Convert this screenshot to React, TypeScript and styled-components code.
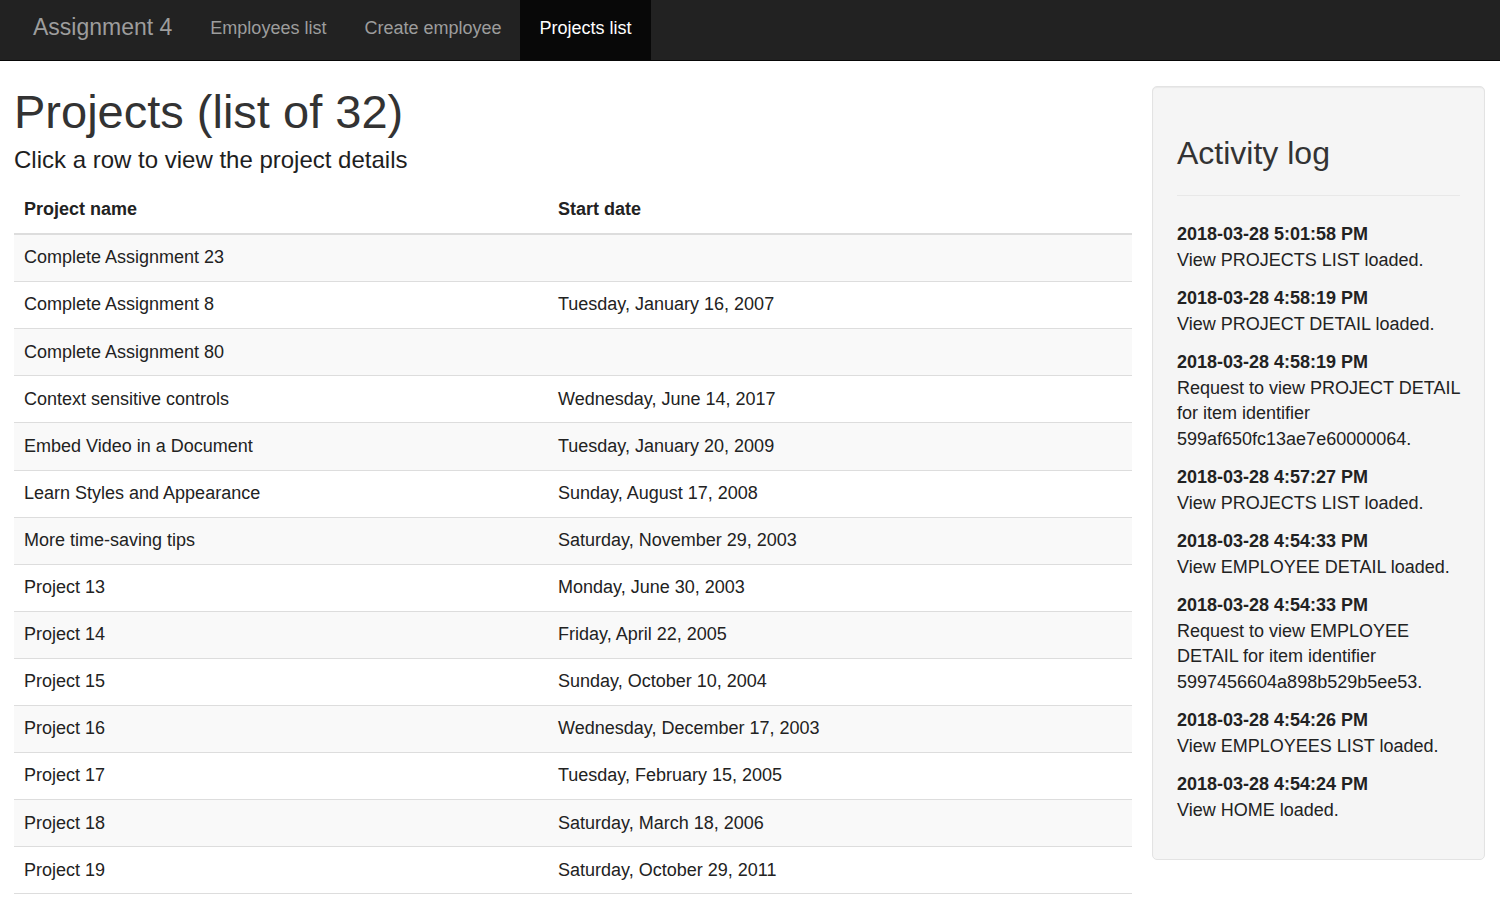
import styled, { createGlobalStyle } from 'styled-components';

const projects = [
  { name: 'Complete Assignment 23', start: '' },
  { name: 'Complete Assignment 8', start: 'Tuesday, January 16, 2007' },
  { name: 'Complete Assignment 80', start: '' },
  { name: 'Context sensitive controls', start: 'Wednesday, June 14, 2017' },
  { name: 'Embed Video in a Document', start: 'Tuesday, January 20, 2009' },
  { name: 'Learn Styles and Appearance', start: 'Sunday, August 17, 2008' },
  { name: 'More time-saving tips', start: 'Saturday, November 29, 2003' },
  { name: 'Project 13', start: 'Monday, June 30, 2003' },
  { name: 'Project 14', start: 'Friday, April 22, 2005' },
  { name: 'Project 15', start: 'Sunday, October 10, 2004' },
  { name: 'Project 16', start: 'Wednesday, December 17, 2003' },
  { name: 'Project 17', start: 'Tuesday, February 15, 2005' },
  { name: 'Project 18', start: 'Saturday, March 18, 2006' },
  { name: 'Project 19', start: 'Saturday, October 29, 2011' },
];

const activity = [
  { when: '2018-03-28 5:01:58 PM', what: 'View PROJECTS LIST loaded.' },
  { when: '2018-03-28 4:58:19 PM', what: 'View PROJECT DETAIL loaded.' },
  { when: '2018-03-28 4:58:19 PM', what: 'Request to view PROJECT DETAIL for item identifier 599af650fc13ae7e60000064.' },
  { when: '2018-03-28 4:57:27 PM', what: 'View PROJECTS LIST loaded.' },
  { when: '2018-03-28 4:54:33 PM', what: 'View EMPLOYEE DETAIL loaded.' },
  { when: '2018-03-28 4:54:33 PM', what: 'Request to view EMPLOYEE DETAIL for item identifier 5997456604a898b529b5ee53.' },
  { when: '2018-03-28 4:54:26 PM', what: 'View EMPLOYEES LIST loaded.' },
  { when: '2018-03-28 4:54:24 PM', what: 'View HOME loaded.' },
];

const navLinks = [
  { label: 'Employees list', active: false },
  { label: 'Create employee', active: false },
  { label: 'Projects list', active: true },
];

const App = () => {
  return (
    <>
      <GlobalStyle />

      <NavBar>
        <Brand href="#">Assignment 4</Brand>
        {navLinks.map(link => (
          <NavLink key={link.label} href="#" $active={link.active}>{link.label}</NavLink>
        ))}
      </NavBar>

      <Page>
        <Main>
          <Title>Projects (list of 32)</Title>
          <Subtitle>Click a row to view the project details</Subtitle>

          <Table>
            <thead>
              <tr>
                <HeadCell $width="514px">Project name</HeadCell>
                <HeadCell>Start date</HeadCell>
              </tr>
            </thead>
            <tbody>
              {projects.map(item => (
                <Row key={item.name}>
                  <Cell>{item.name}</Cell>
                  <Cell>{item.start}</Cell>
                </Row>
              ))}
            </tbody>
          </Table>
        </Main>

        <Well>
          <WellHeading>Activity log</WellHeading>
          <Rule />
          {activity.map((entry, i) => (
            <Entry key={i}>
              <EntryTime>{entry.when}</EntryTime>
              <div>{entry.what}</div>
            </Entry>
          ))}
        </Well>
      </Page>
    </>
  );
};

const GlobalStyle = createGlobalStyle`
  body {
    margin: 0;
    background: #ffffff;
    font-family: "Liberation Sans", Arial, Helvetica, sans-serif;
    font-size: 18px;
    line-height: 25.5px;
    color: #333333;
  }
`;

const NavBar = styled.nav`
  display: flex;
  height: 60px;
  padding-left: 14px;
  background: #222222;
  border-bottom: 1px solid #080808;
`;

const Brand = styled.a`
  padding: 14px 19px 20px;
  font-size: 23px;
  line-height: 26px;
  color: #9d9d9d;
  text-decoration: none;
`;

const NavLink = styled.a<{ $active?: boolean }>`
  padding: 15px 19px 19px;
  font-size: 18px;
  line-height: 26px;
  text-decoration: none;
  color: ${p => (p.$active ? '#ffffff' : '#9d9d9d')};
  background: ${p => (p.$active ? '#080808' : 'transparent')};
`;

const Page = styled.div`
  display: flex;
  align-items: flex-start;
  gap: 20px;
  padding: 0 15px 0 14px;
`;

const Main = styled.div`
  flex: 1;
  min-width: 0;
`;

const Title = styled.h1`
  margin: 25px 0 9px;
  font-size: 47px;
  font-weight: 500;
  line-height: 1.1;
  color: #333333;
`;

const Subtitle = styled.h4`
  margin: 0 0 14px;
  font-size: 24px;
  font-weight: 500;
  line-height: 1.1;
  color: #1e1e1e;
`;

const Table = styled.table`
  width: 100%;
  border-collapse: collapse;
  border-spacing: 0;
`;

const HeadCell = styled.th<{ $width?: string }>`
  width: ${p => p.$width || 'auto'};
  padding: 10.25px 10px;
  text-align: left;
  font-weight: 700;
  color: #222222;
  border-bottom: 2px solid #dddddd;
`;

const Row = styled.tr`
  &:nth-child(odd) {
    background: #f9f9f9;
  }

  &:last-child td {
    border-bottom: 1px solid #dddddd;
  }
`;

const Cell = styled.td`
  padding: 10.3px 10px;
  border-top: 1px solid #dddddd;
  color: #222222;
`;

const Well = styled.aside`
  flex: none;
  width: 333px;
  box-sizing: border-box;
  margin-top: 25px;
  padding: 24px;
  background: #f5f5f5;
  border: 1px solid #e3e3e3;
  border-radius: 5px;
  box-shadow: inset 0 1px 1px rgba(0, 0, 0, 0.05);
  color: #222222;
`;

const WellHeading = styled.h3`
  margin: 25px 0 24px;
  font-size: 32px;
  font-weight: 500;
  line-height: 1.1;
  color: #333333;
`;

const Rule = styled.hr`
  margin: 0 0 26px;
  border: 0;
  border-top: 1px solid #e8e8e8;
`;

const Entry = styled.div`
  margin-bottom: 13px;

  &:last-child {
    margin-bottom: 12px;
  }
`;

const EntryTime = styled.div`
  font-weight: 700;
`;

export default App;
